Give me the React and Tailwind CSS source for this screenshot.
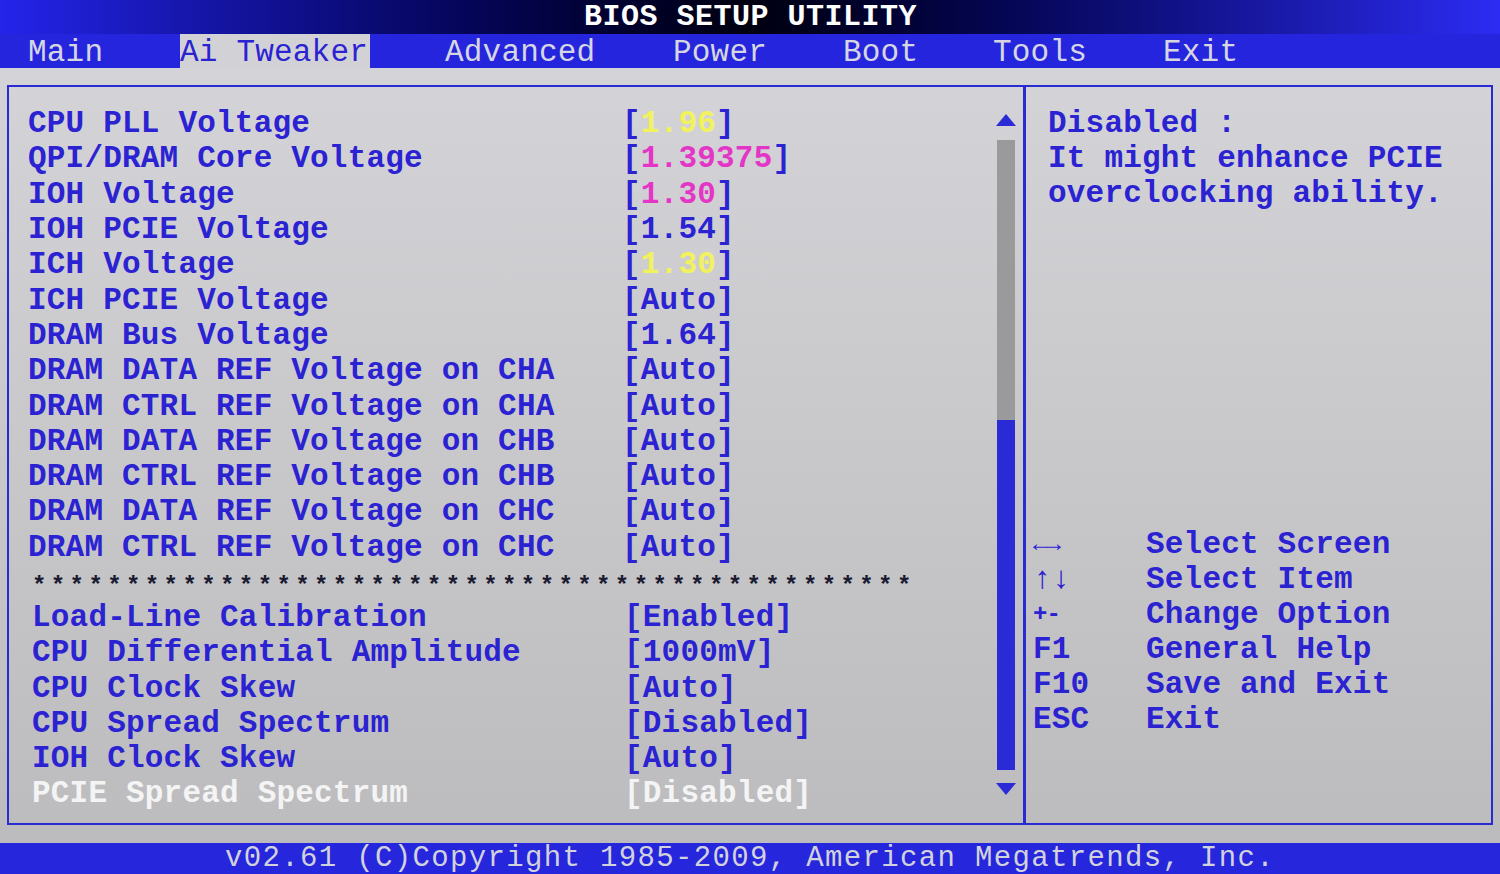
const MONO = { fontFamily: '"Liberation Mono", "DejaVu Sans Mono", monospace' };

const menus = [
  { label: "Main", left: 28 },
  { label: "Ai Tweaker", left: 180, active: true },
  { label: "Advanced", left: 445 },
  { label: "Power", left: 673 },
  { label: "Boot", left: 843 },
  { label: "Tools", left: 993 },
  { label: "Exit", left: 1163 },
];

const voltages = [
  { name: "CPU PLL Voltage", value: "1.96", tone: "yellow" },
  { name: "QPI/DRAM Core Voltage", value: "1.39375", tone: "pink" },
  { name: "IOH Voltage", value: "1.30", tone: "pink" },
  { name: "IOH PCIE Voltage", value: "1.54" },
  { name: "ICH Voltage", value: "1.30", tone: "yellow" },
  { name: "ICH PCIE Voltage", value: "Auto" },
  { name: "DRAM Bus Voltage", value: "1.64" },
  { name: "DRAM DATA REF Voltage on CHA", value: "Auto" },
  { name: "DRAM CTRL REF Voltage on CHA", value: "Auto" },
  { name: "DRAM DATA REF Voltage on CHB", value: "Auto" },
  { name: "DRAM CTRL REF Voltage on CHB", value: "Auto" },
  { name: "DRAM DATA REF Voltage on CHC", value: "Auto" },
  { name: "DRAM CTRL REF Voltage on CHC", value: "Auto" },
];

const clocks = [
  { name: "Load-Line Calibration", value: "Enabled" },
  { name: "CPU Differential Amplitude", value: "1000mV" },
  { name: "CPU Clock Skew", value: "Auto" },
  { name: "CPU Spread Spectrum", value: "Disabled" },
  { name: "IOH Clock Skew", value: "Auto" },
  { name: "PCIE Spread Spectrum", value: "Disabled", selected: true },
];

const keys = [
  { key: "←→", desc: "Select Screen", small: true },
  { key: "↑↓", desc: "Select Item" },
  { key: "+-", desc: "Change Option", small: true },
  { key: "F1", desc: "General Help" },
  { key: "F10", desc: "Save and Exit" },
  { key: "ESC", desc: "Exit" },
];

function Row({ item, valueLeft }) {
  const base = item.selected ? "text-[#f4f4f4]" : "text-[#2b22d2]";
  const num =
    item.tone === "yellow"
      ? "text-[#f2f25c]"
      : item.tone === "pink"
      ? "text-[#e436c6]"
      : "";
  return (
    <div className={`flex h-[35.3px] items-center ${base}`}>
      <div className={valueLeft}>{item.name}</div>
      <div>
        [<span className={num}>{item.value}</span>]
      </div>
    </div>
  );
}

export default function App() {
  return (
    <div
      className="w-[1500px] h-[874px] flex flex-col overflow-hidden font-bold text-[31px] tracking-[0.2px] leading-none"
      style={MONO}
    >
      {/* title bar */}
      <div className="h-[34px] flex items-center justify-center bg-linear-to-r from-[#2424ea] via-[#000010] to-[#2c2cf4]">
        <span className="text-white text-[30px] pl-[1px] tracking-[0.5px]">BIOS SETUP UTILITY</span>
      </div>

      {/* menu bar */}
      <div className="relative h-[34px] bg-[#2525de] text-[#d6d6e2] font-normal">
        {menus.map((m) => (
          <div
            key={m.label}
            className={`absolute top-0 h-[34px] flex items-center pt-[3px] ${
              m.active ? "bg-[#d2d2d6] text-[#2b22d2] w-[190px]" : ""
            }`}
            style={{ left: m.left }}
          >
            {m.label}
          </div>
        ))}
      </div>

      {/* body */}
      <div className="flex-1 bg-linear-to-b from-[#d4d4d8] to-[#bcbcbe] pt-[17px] px-[7px] pb-[18px]">
        <div className="h-full flex border-2 border-[#2a2ad2]">
          {/* left panel */}
          <div className="w-[1014px] flex">
            <div className="flex-1 pl-[19px] pt-[19px]">
              {voltages.map((v) => (
                <Row key={v.name} item={v} valueLeft="w-[594px]" />
              ))}
              <div className="h-[35px] flex items-center pl-[4px] text-[#1a1a30] text-[24px] tracking-[4.4px] pt-[9px]">
                {"*".repeat(47)}
              </div>
              <div className="pl-[4px]">
                {clocks.map((c) => (
                  <Row key={c.name} item={c} valueLeft="w-[592px]" />
                ))}
              </div>
            </div>
            {/* scrollbar */}
            <div className="w-[20px] mr-[7px] flex flex-col items-center pt-[27px]">
              <div className="w-0 h-0 border-l-[10px] border-r-[10px] border-b-[12px] border-l-transparent border-r-transparent border-b-[#2a2ad6]" />
              <div className="mt-[14px] w-[18px] h-[280px] bg-[#9a9a9c]" />
              <div className="w-[18px] h-[350px] bg-[#2a2ad6]" />
              <div className="mt-[13px] w-0 h-0 border-l-[10px] border-r-[10px] border-t-[12px] border-l-transparent border-r-transparent border-t-[#2a2ad6]" />
            </div>
          </div>

          {/* right panel */}
          <div className="flex-1 border-l-[3px] border-[#2a2ad2] flex flex-col text-[#2b22d2]">
            <div className="pl-[22px] pt-[19px]">
              <div className="h-[35px] flex items-center">Disabled :</div>
              <div className="h-[35px] flex items-center">It might enhance PCIE</div>
              <div className="h-[35px] flex items-center">overclocking ability.</div>
            </div>
            <div className="mt-auto pl-[7px] pb-[86px]">
              {keys.map((k) => (
                <div key={k.desc} className="h-[35px] flex items-center">
                  <div className={`w-[113px] ${k.small ? "text-[24px] tracking-[-1px]" : ""}`}>{k.key}</div>
                  <div>{k.desc}</div>
                </div>
              ))}
            </div>
          </div>
        </div>
      </div>

      {/* footer */}
      <div className="h-[31px] bg-[#2626dc] text-[#d2d2dc] font-normal text-[29px] tracking-[1.35px] flex items-center justify-center">
        v02.61 (C)Copyright 1985-2009, American Megatrends, Inc.
      </div>
    </div>
  );
}
